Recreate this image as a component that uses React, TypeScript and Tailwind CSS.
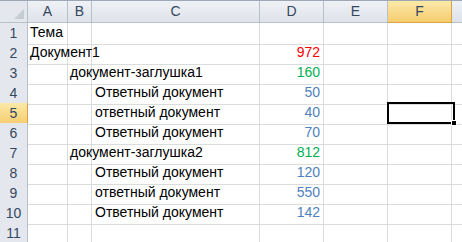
import React from "react";

type Row = { a?: string; b?: string; c?: string; d?: string; color?: string };

const rows: Row[] = [
  { a: "Тема" },
  { a: "Документ1", d: "972", color: "text-[#ff0000]" },
  { b: "документ-заглушка1", d: "160", color: "text-[#00b050]" },
  { c: "Ответный документ", d: "50", color: "text-[#4f81bd]" },
  { c: "ответный документ", d: "40", color: "text-[#4f81bd]" },
  { c: "Ответный документ", d: "70", color: "text-[#4f81bd]" },
  { b: "документ-заглушка2", d: "812", color: "text-[#00b050]" },
  { c: "Ответный документ", d: "120", color: "text-[#4f81bd]" },
  { c: "ответный документ", d: "550", color: "text-[#4f81bd]" },
  { c: "Ответный документ", d: "142", color: "text-[#4f81bd]" },
  {},
];

const cols = ["A", "B", "C", "D", "E", "F"];

export default function App() {
  return (
    <div className="w-[462px] h-[242px] overflow-hidden bg-white font-['Liberation_Sans',sans-serif] text-[14px] text-black border-t border-[#9ea8b5]">
      <div className="relative">
        {/* header row */}
        <div className="grid grid-cols-[28px_40px_24px_168px_64px_64px_64px_1fr] h-[22px]">
          <div className="relative bg-[#e4e8ee] border-r border-b border-[#b8c0cb]">
            <div className="absolute right-[3px] bottom-[3px] w-0 h-0 border-l-[10px] border-l-transparent border-b-[10px] border-b-[#c6ccd4]" />
          </div>
          {cols.map((c) =>
            c === "F" ? (
              <div
                key={c}
                className="flex items-center justify-center bg-gradient-to-b from-[#fbe9a8] to-[#f6cd6e] border-r border-b border-[#d9a342] text-[#35475e]"
              >
                {c}
              </div>
            ) : (
              <div
                key={c}
                className="flex items-center justify-center bg-gradient-to-b from-[#eef1f5] to-[#dfe3e9] border-r border-b border-[#b8c0cb] text-[#35475e]"
              >
                {c}
              </div>
            )
          )}
          <div className="bg-gradient-to-b from-[#eef1f5] to-[#dfe3e9] border-b border-[#b8c0cb]" />
        </div>

        {rows.map((r, i) => (
          <div
            key={i}
            className="grid grid-cols-[28px_40px_24px_168px_64px_64px_64px_1fr] h-[20px]"
          >
            {i === 4 ? (
              <div className="flex items-center justify-center bg-gradient-to-b from-[#fbe9a8] to-[#f6cd6e] border-r border-b border-[#d9a342] text-[#35475e]">
                {i + 1}
              </div>
            ) : (
              <div className="flex items-center justify-center bg-[#e4e8ee] border-r border-b border-[#b8c0cb] text-[#35475e]">
                {i + 1}
              </div>
            )}
            <div className="relative border-r border-b border-[#dadcdd]">
              {r.a && (
                <span className="absolute left-[2px] top-0 leading-[19px] whitespace-nowrap z-10">
                  {r.a}
                </span>
              )}
            </div>
            <div className="relative border-r border-b border-[#dadcdd]">
              {r.b && (
                <span className="absolute left-[2px] top-0 leading-[19px] whitespace-nowrap z-10">
                  {r.b}
                </span>
              )}
            </div>
            <div className="relative border-r border-b border-[#dadcdd]">
              {r.c && (
                <span className="absolute left-[3px] top-0 leading-[19px] whitespace-nowrap">
                  {r.c}
                </span>
              )}
            </div>
            <div
              className={`border-r border-b border-[#dadcdd] text-right pr-[3px] leading-[19px] ${r.color ?? ""}`}
            >
              {r.d}
            </div>
            <div className="border-r border-b border-[#dadcdd]" />
            <div className="border-r border-b border-[#dadcdd]" />
            <div className="border-b border-[#dadcdd]" />
          </div>
        ))}

        {/* active cell F5 */}
        <div className="absolute left-[387px] top-[101px] w-[68px] h-[22px] border-[2px] border-black">
          <div className="absolute -right-[4px] -bottom-[4px] w-[6px] h-[6px] bg-black border border-white" />
        </div>
      </div>
    </div>
  );
}
